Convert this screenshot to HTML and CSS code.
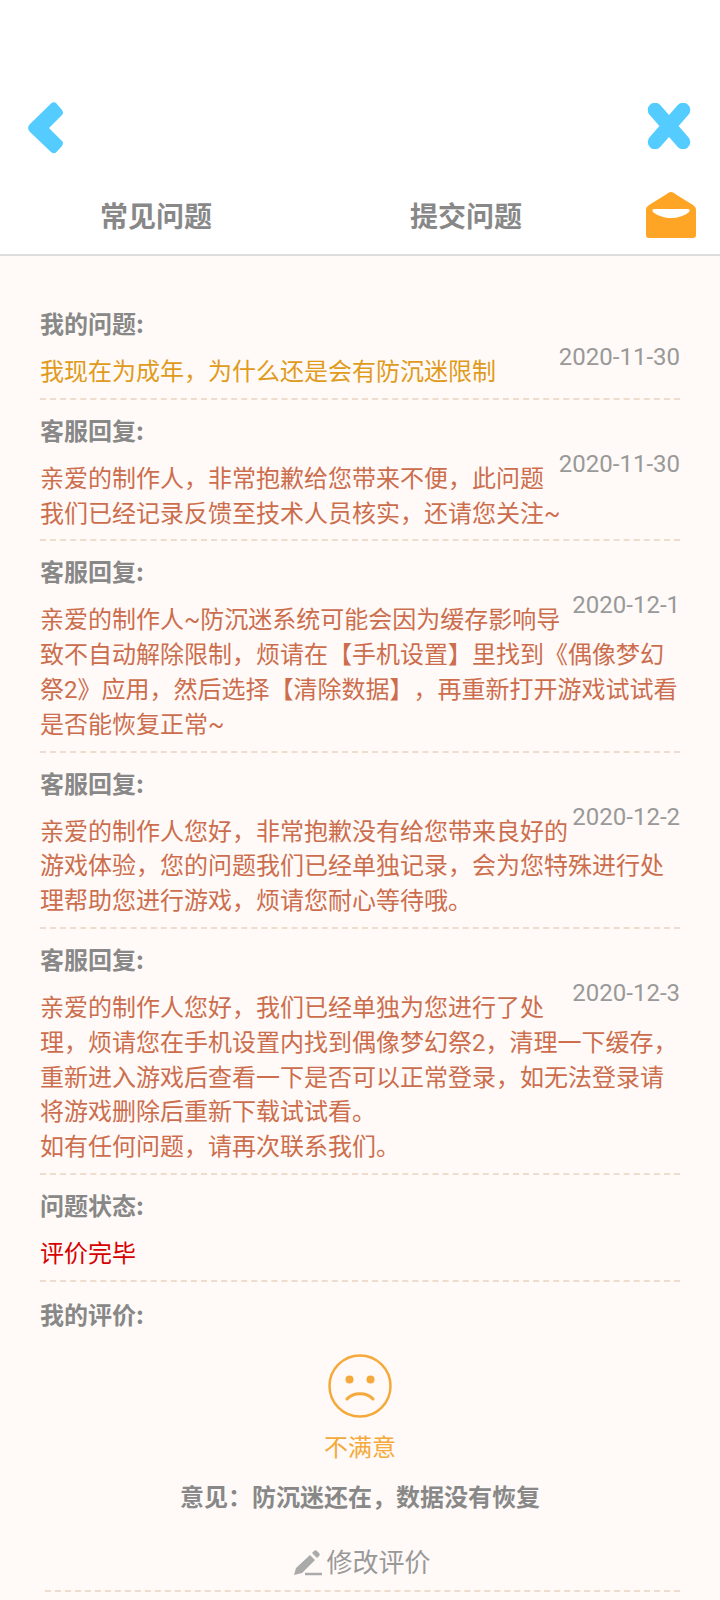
FILE: index.html
```html
<!DOCTYPE html>
<html lang="zh-CN">
<head>
    <meta charset="UTF-8">
    <meta name="viewport" content="width=device-width, initial-scale=1.0">
    <title>我的问题</title>
    <link rel="stylesheet" href="styles.css">
</head>
<body>
    <div class="top-bar">
        <svg class="icon-back" width="37" height="52" viewBox="0 0 37 52">
            <path d="M24 1.500 Q27 -1 29.500 1.500 L35 8 Q37 11 35 13 L22 26 L35 39 Q37 41 35 44 L29.500 50 Q27 52.500 24 50 L3 30 Q-1 26 3 22 Z" fill="#55ccff"/>
        </svg>
        <svg class="icon-close" width="44" height="46" viewBox="0 0 44 46">
            <path d="M8 7 L36 39 M36 7 L8 39" fill="none" stroke="#55ccff" stroke-width="14.500" stroke-linecap="round"/>
        </svg>
    </div>
    <div class="tabs">
        <span class="tab tab-faq">常见问题</span>
        <span class="tab tab-submit">提交问题</span>
        <svg class="icon-mail" width="50" height="46" viewBox="0 0 50 46">
            <path d="M25 0 C27 0 28 1 30 2.500 L47 13 C49 14.500 50 16 50 18 L50 43 C50 45 49 46 47 46 L3 46 C1 46 0 45 0 43 L0 18 C0 16 1 14.500 3 13 L20 2.500 C22 1 23 0 25 0 Z" fill="#ffa526"/>
            <path d="M8 17 L42 17 C44 17 44 19 43 20 C38 24 31 26 25 26 C19 26 12 24 7 20 C6 19 6 17 8 17 Z" fill="#fff"/>
        </svg>
    </div>

    <div class="content">
        <div class="row">
            <div class="label">我的问题:</div>
            <div class="text question"><span class="date">2020-11-30</span>我现在为成年，为什么还是会有防沉迷限制</div>
        </div>
        <div class="row">
            <div class="label">客服回复:</div>
            <div class="text"><span class="date">2020-11-30</span>亲爱的制作人，非常抱歉给您带来不便，此问题我们已经记录反馈至技术人员核实，还请您关注~</div>
        </div>
        <div class="row">
            <div class="label">客服回复:</div>
            <div class="text"><span class="date">2020-12-1</span>亲爱的制作人~防沉迷系统可能会因为缓存影响导致不自动解除限制，烦请在【手机设置】里找到《偶像梦幻祭2》应用，然后选择【清除数据】，再重新打开游戏试试看是否能恢复正常~</div>
        </div>
        <div class="row">
            <div class="label">客服回复:</div>
            <div class="text"><span class="date">2020-12-2</span>亲爱的制作人您好，非常抱歉没有给您带来良好的游戏体验，您的问题我们已经单独记录，会为您特殊进行处理帮助您进行游戏，烦请您耐心等待哦。</div>
        </div>
        <div class="row">
            <div class="label">客服回复:</div>
            <div class="text"><span class="date">2020-12-3</span>亲爱的制作人您好，我们已经单独为您进行了处理，烦请您在手机设置内找到偶像梦幻祭2，清理一下缓存，重新进入游戏后查看一下是否可以正常登录，如无法登录请将游戏删除后重新下载试试看。<br>如有任何问题，请再次联系我们。</div>
        </div>
        <div class="row">
            <div class="label">问题状态:</div>
            <div class="text status">评价完毕</div>
        </div>
        <div class="rating">
            <div class="label">我的评价:</div>
            <svg class="face" width="64" height="64" viewBox="0 0 64 64">
                <circle cx="32" cy="32" r="30.500" fill="none" stroke="#f5a93a" stroke-width="2.500"/>
                <circle cx="21.500" cy="25.500" r="4" fill="#f5a93a"/>
                <circle cx="42.500" cy="25.500" r="4" fill="#f5a93a"/>
                <path d="M19 45 C25 38 39 38 45 45" fill="none" stroke="#f5a93a" stroke-width="3" stroke-linecap="round"/>
            </svg>
            <div class="rating-name">不满意</div>
            <div class="opinion">意见：防沉迷还在，数据没有恢复</div>
            <div class="edit">
                <svg width="28" height="26" viewBox="0 0 28 26">
                    <path d="M0 25 L2 18 L16 5 L21 10 L8 23 Z M18 3 L20 1 C21 0 22 0 23 1 L25 3 C26 4 26 5 25 6 L23 8 Z" fill="#aaa"/>
                    <path d="M11 24 L28 24" stroke="#aaa" stroke-width="2.500"/>
                </svg>
                <span>修改评价</span>
            </div>
        </div>
    </div>
</body>
</html>
```

FILE: styles.css
```css
body {
    margin: 0;
    background-color: #fffaf7;
    font-family: Roboto, "Noto Sans CJK SC", sans-serif;
    font-size: 24px;
    color: #888;
    text-spacing-trim: space-all;
}
.top-bar {
    background-color: white;
    height: 52px;
    padding: 102px 29px 0 27px;
    display: flex;
    justify-content: space-between;
    align-items: flex-start;
}
.icon-close {
    margin-top: 1px;
}
.tabs {
    background-color: white;
    height: 102px;
    border-bottom: 2px solid #ddd;
    position: relative;
    box-sizing: border-box;
    display: flex;
    align-items: center;
}
.tab {
    font-size: 28px;
    font-weight: bold;
    color: #888;
    margin-top: 22px;
}
.tab-faq {
    margin-left: 100px;
}
.tab-submit {
    margin-left: 198px;
}
.icon-mail {
    position: absolute;
    left: 646px;
    top: 38px;
}
.content {
    padding: 49px 40px 0 40px;
}
.row {
    border-bottom: 2px dashed #eeddcc;
    padding-bottom: 8px;
    margin-bottom: 12px;
}
.label {
    font-family: "Noto Sans CJK SC", sans-serif;
    font-weight: bold;
    line-height: 36px;
}
.text {
    margin-top: 14px;
    line-height: 34.8px;
    color: #cc6e4e;
}
.question {
    color: #e09a1c;
}
.status {
    color: #d60000;
}
.date {
    float: right;
    height: 20px;
    line-height: 36px;
    margin-top: -16px;
    color: #999;
}
.rating {
    margin-top: 14px;
    text-align: center;
}
.rating .label {
    text-align: left;
}
.face {
    display: block;
    margin: 22px auto 0;
}
.rating-name {
    margin-top: 12px;
    line-height: 36px;
    color: #f5a93a;
}
.opinion {
    margin-top: 14px;
    line-height: 36px;
    font-weight: bold;
}
.edit {
    margin: 28px 0 0 5px;
    padding-bottom: 8px;
    border-bottom: 2px dashed #eeddcc;
    display: flex;
    justify-content: center;
    align-items: center;
    gap: 4px;
    font-size: 26px;
    line-height: 38px;
    color: #999;
}
```
